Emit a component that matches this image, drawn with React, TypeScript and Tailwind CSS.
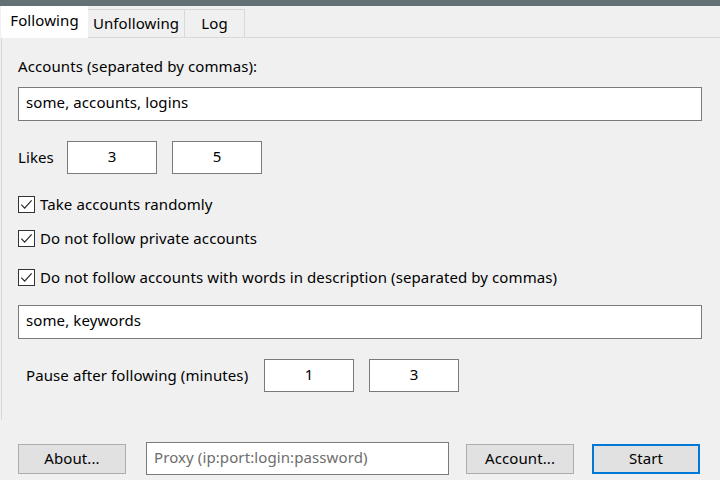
import React from "react";

function Box({ value, className = "" }: { value: string; className?: string }) {
  return (
    <div
      className={`flex h-[33px] w-[90px] items-center justify-center border border-[#7a7a7a] bg-white pb-[2px] ${className}`}
    >
      {value}
    </div>
  );
}

function Check({ label, className = "" }: { label: string; className?: string }) {
  return (
    <div className={`flex h-[20px] items-center ${className}`}>
      <div className="flex h-[17px] w-[17px] items-center justify-center border border-[#333333] bg-white">
        <svg viewBox="0 0 16 16" className="h-[15px] w-[15px]">
          <path d="M2.5 8.2 L6 11.8 L13.5 3.6" fill="none" stroke="#222222" strokeWidth="1.2" />
        </svg>
      </div>
      <span className="ml-[5px]">{label}</span>
    </div>
  );
}

function Button({ label, primary = false }: { label: string; primary?: boolean }) {
  return (
    <div
      className={`flex h-[30px] w-[108px] items-center justify-center bg-[#e1e1e1] ${
        primary ? "border-2 border-[#0078d7]" : "border border-[#adadad]"
      }`}
    >
      {label}
    </div>
  );
}

export default function App() {
  return (
    <div
      className="h-[480px] w-[720px] overflow-hidden bg-[#f0f0f0] text-[15px] tracking-[0.1px] text-black"
      style={{ fontFamily: '"Noto Sans", "Segoe UI", sans-serif' }}
    >
      <div className="h-[6px] bg-[#637076]" />

      {/* tabs */}
      <div className="flex h-[31px] items-end pl-px">
        <div className="relative z-10 -mb-px flex h-[32px] w-[87px] items-center justify-center bg-white pb-[3px]">
          Following
        </div>
        <div className="flex h-[28px] w-[97px] items-center justify-center border-r border-t border-[#d9d9d9]">
          Unfollowing
        </div>
        <div className="flex h-[28px] w-[60px] items-center justify-center border-r border-t border-[#d9d9d9]">
          Log
        </div>
      </div>

      {/* tab page */}
      <div className="ml-px h-[383px] border-l border-t border-[#d9d9d9] pl-[16px] pr-[18px]">
        <div className="mt-[18px] h-[20px] leading-[20px]">Accounts (separated by commas):</div>
        <div className="mt-[11px] flex h-[34px] items-center border border-[#7a7a7a] bg-white pb-[3px] pl-[7px]">
          some, accounts, logins
        </div>

        <div className="mt-[20px] flex items-center">
          <span className="w-[49px]">Likes</span>
          <Box value="3" />
          <Box value="5" className="ml-[15px]" />
        </div>

        <Check label="Take accounts randomly" className="mt-[20px]" />
        <Check label="Do not follow private accounts" className="mt-[14px]" />
        <Check
          label="Do not follow accounts with words in description (separated by commas)"
          className="mt-[19px]"
        />

        <div className="mt-[18px] flex h-[34px] items-center border border-[#7a7a7a] bg-white pb-[3px] pl-[7px]">
          some, keywords
        </div>

        <div className="mt-[20px] flex items-center pl-[8px]">
          <span className="w-[238px]">Pause after following (minutes)</span>
          <Box value="1" />
          <Box value="3" className="ml-[15px]" />
        </div>
      </div>

      {/* bottom bar */}
      <div className="mt-[22px] flex items-center pl-[18px]">
        <Button label="About..." />
        <div className="ml-[20px] flex h-[33px] w-[303px] items-center border border-[#7a7a7a] bg-white pb-[2px] pl-[7px] text-[#6d6d6d]">
          Proxy (ip:port:login:password)
        </div>
        <div className="ml-[17px]">
          <Button label="Account..." />
        </div>
        <div className="ml-[18px]">
          <Button label="Start" primary />
        </div>
      </div>
    </div>
  );
}
